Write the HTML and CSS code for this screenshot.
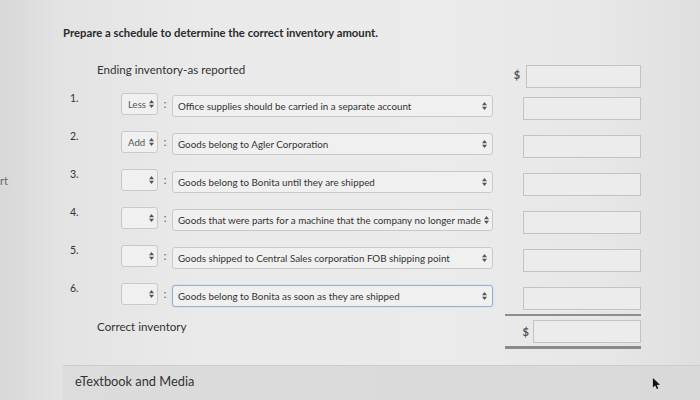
FILE: index.html
```html
<!DOCTYPE html>
<html>
<head>
<meta charset="utf-8">
<link rel="stylesheet" href="styles.css">
</head>
<body>
<span class="edge">rt</span>
<div class="page">
  <h1 class="title">Prepare a schedule to determine the correct inventory amount.</h1>
  <div class="row head">
    <div class="label">Ending inventory-as reported</div>
    <div class="dollar">$</div>
    <div class="input first"></div>
  </div>

  <div class="row">
    <div class="num">1.</div>
    <div class="sel small"><span>Less</span><svg class="arr" viewBox="0 0 5 8"><path d="M0 3.3L2.5 0 5 3.3zM0 4.7L2.5 8 5 4.7z"/></svg></div>
    <div class="colon">:</div>
    <div class="sel wide"><span>Office supplies should be carried in a separate account</span><svg class="arr" viewBox="0 0 5 8"><path d="M0 3.3L2.5 0 5 3.3zM0 4.7L2.5 8 5 4.7z"/></svg></div>
    <div class="dollar"></div>
    <div class="input"></div>
  </div>

  <div class="row">
    <div class="num">2.</div>
    <div class="sel small"><span>Add</span><svg class="arr" viewBox="0 0 5 8"><path d="M0 3.3L2.5 0 5 3.3zM0 4.7L2.5 8 5 4.7z"/></svg></div>
    <div class="colon">:</div>
    <div class="sel wide"><span>Goods belong to Agler Corporation</span><svg class="arr" viewBox="0 0 5 8"><path d="M0 3.3L2.5 0 5 3.3zM0 4.7L2.5 8 5 4.7z"/></svg></div>
    <div class="dollar"></div>
    <div class="input"></div>
  </div>

  <div class="row">
    <div class="num">3.</div>
    <div class="sel small"><span></span><svg class="arr" viewBox="0 0 5 8"><path d="M0 3.3L2.5 0 5 3.3zM0 4.7L2.5 8 5 4.7z"/></svg></div>
    <div class="colon">:</div>
    <div class="sel wide"><span>Goods belong to Bonita until they are shipped</span><svg class="arr" viewBox="0 0 5 8"><path d="M0 3.3L2.5 0 5 3.3zM0 4.7L2.5 8 5 4.7z"/></svg></div>
    <div class="dollar"></div>
    <div class="input"></div>
  </div>

  <div class="row">
    <div class="num">4.</div>
    <div class="sel small"><span></span><svg class="arr" viewBox="0 0 5 8"><path d="M0 3.3L2.5 0 5 3.3zM0 4.7L2.5 8 5 4.7z"/></svg></div>
    <div class="colon">:</div>
    <div class="sel wide"><span>Goods that were parts for a machine that the company no longer made</span><svg class="arr" viewBox="0 0 5 8"><path d="M0 3.3L2.5 0 5 3.3zM0 4.7L2.5 8 5 4.7z"/></svg></div>
    <div class="dollar"></div>
    <div class="input"></div>
  </div>

  <div class="row">
    <div class="num">5.</div>
    <div class="sel small"><span></span><svg class="arr" viewBox="0 0 5 8"><path d="M0 3.3L2.5 0 5 3.3zM0 4.7L2.5 8 5 4.7z"/></svg></div>
    <div class="colon">:</div>
    <div class="sel wide"><span>Goods shipped to Central Sales corporation FOB shipping point</span><svg class="arr" viewBox="0 0 5 8"><path d="M0 3.3L2.5 0 5 3.3zM0 4.7L2.5 8 5 4.7z"/></svg></div>
    <div class="dollar"></div>
    <div class="input"></div>
  </div>

  <div class="row last">
    <div class="num">6.</div>
    <div class="sel small"><span></span><svg class="arr" viewBox="0 0 5 8"><path d="M0 3.3L2.5 0 5 3.3zM0 4.7L2.5 8 5 4.7z"/></svg></div>
    <div class="colon">:</div>
    <div class="sel wide focus"><span>Goods belong to Bonita as soon as they are shipped</span><svg class="arr" viewBox="0 0 5 8"><path d="M0 3.3L2.5 0 5 3.3zM0 4.7L2.5 8 5 4.7z"/></svg></div>
    <div class="dollar"></div>
    <div class="input"></div>
  </div>

  <div class="row total">
    <div class="label">Correct inventory</div>
    <div class="sumcell">
      <div class="dollar">$</div>
      <div class="input"></div>
    </div>
  </div>
</div>
<div class="media">
  <span>eTextbook and Media</span>
  <svg class="cursor" viewBox="0 0 10 14"><path d="M1 1L1 11.5 3.6 9.2 5.4 13.2 7 12.5 5.3 8.6 8.8 8.4z"/></svg>
</div>
</body>
</html>
```
FILE: styles.css
```css
html, body {
  margin: 0;
  padding: 0;
}
body {
  width: 700px;
  height: 400px;
  overflow: hidden;
  position: relative;
  font-family: Lato, "Open Sans", sans-serif;
  color: #333;
  background: linear-gradient(to right, #d8d8d8 0px, #e3e3e3 60px, #eaeaea 200px, #ebebeb 450px, #e7e7e7 600px, #dfdfdf 700px);
}
.edge {
  position: absolute;
  left: 0;
  top: 174px;
  font-size: 11px;
  color: #666;
}
.page {
  padding: 26px 0 0 63px;
  width: 578px;
  height: 339px;
}
.title {
  margin: 0;
  font-size: 11.3px;
  font-weight: 700;
  line-height: 14px;
  color: #2a2a2a;
}
.row {
  display: flex;
  align-items: flex-start;
  height: 38px;
}
.row.head {
  margin-top: 23px;
  height: 30px;
}
.row.head .label {
  margin-left: 34px;
  width: 396px;
  font-size: 11.6px;
  line-height: 13px;
  color: #333;
}
.row.head .dollar {
  width: 37px;
  margin-top: 5px;
}
.row.head .input.first {
  margin-top: 2px;
  margin-left: 0;
  width: 116px;
}
.num {
  width: 51px;
  padding-left: 7px;
  font-size: 10.5px;
  line-height: 12px;
  margin-top: -1px;
  color: #333;
}
.sel {
  box-sizing: border-box;
  height: 22px;
  background: #f0f0f0;
  border: 1px solid #c9c9c9;
  border-radius: 3px;
  display: flex;
  align-items: center;
  justify-content: space-between;
  gap: 3px;
  padding: 0 5px 0 5px;
  white-space: nowrap;
}
.sel.small {
  width: 37px;
  font-size: 9.6px;
  color: #555;
  padding: 0 3px 0 6px;
}
.sel.wide {
  width: 321px;
  font-size: 9.8px;
  color: #333;
  margin-top: 2px;
}
.sel.focus {
  border-color: #8fb2d4;
  box-shadow: 0 0 2px #b4cde4;
}
.arr {
  width: 5px;
  height: 8px;
  fill: #555;
  flex: none;
}
.colon {
  width: 14px;
  text-align: center;
  font-size: 10.5px;
  line-height: 22px;
  color: #555;
}
.dollar {
  width: 30px;
  text-align: right;
  font-size: 11px;
  font-weight: 700;
  color: #555;
  padding-right: 6px;
  box-sizing: border-box;
}
.input {
  box-sizing: border-box;
  width: 118px;
  height: 23px;
  background: #ececec;
  border: 1px solid #c3c3c3;
  margin-top: 4px;
}
.row.last {
  height: 31px;
}
.row.total {
  height: auto;
  align-items: center;
}
.row.total .label {
  flex: 1;
  margin-left: 34px;
  font-size: 11.6px;
  color: #333;
  margin-top: -10px;
}
.sumcell {
  width: 136px;
  display: flex;
  align-items: center;
  justify-content: flex-end;
  border-top: 2px solid #8e8e8e;
  border-bottom: 3px solid #8a8a8a;
  padding: 4px 0 3px;
}
.sumcell .dollar {
  padding-right: 4px;
}
.sumcell .input {
  margin-top: 0;
}
.media {
  position: relative;
  margin-left: 63px;
  height: 35px;
  box-sizing: border-box;
  background: linear-gradient(to right, #dcdcdc, #d9d9d9);
  border-top: 1px solid #cdcdcd;
  display: flex;
  align-items: center;
  padding: 0 0 4px 12px;
  font-size: 12.8px;
  color: #333;
}
.cursor {
  position: absolute;
  left: 589px;
  top: 11px;
  width: 9px;
  height: 13px;
  fill: #111;
}
```
